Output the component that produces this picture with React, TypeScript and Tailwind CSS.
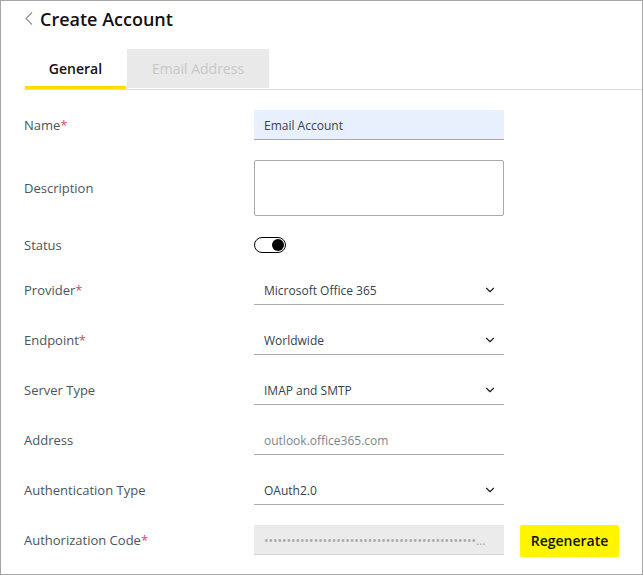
import { ChevronDown } from "lucide-react";

const labelClass = "w-[230px] shrink-0 pt-[2px] text-[13px] text-[#4a5560]";

const Label = ({ text, required }: { text: string; required?: boolean }) => (
  <div className={labelClass}>
    {text}
    {required && <span className="text-[#d9486a]">*</span>}
  </div>
);

const SelectRow = ({ label, value, required }: { label: string; value: string; required?: boolean }) => (
  <div className="flex items-center">
    <Label text={label} required={required} />
    <div className="flex h-[30px] w-[250px] items-center justify-between border-b border-[#aaaaaa] pl-[10px] pr-[7px] pt-[2px] text-[12px] text-[#36424e]">
      <span>{value}</span>
      <ChevronDown className="mb-[2px] h-[14px] w-[14px] text-[#222222]" strokeWidth={2} />
    </div>
  </div>
);

export default function App() {
  return (
    <div className="h-[575px] w-[643px] overflow-hidden border border-[#a6a6a6] bg-white font-['Open_Sans',sans-serif]">
      <div className="flex h-[48px] items-start pl-[24px] pt-[6px]">
        <svg className="mt-[5px] shrink-0" width="8" height="13" viewBox="0 0 8 13" fill="none">
          <path d="M7 0.5L1 6.5L7 12.5" stroke="#8f8f8f" strokeWidth="1.1" />
        </svg>
        <h1 className="ml-[7px] text-[18px] leading-[24px] font-semibold text-[#111111]">Create Account</h1>
      </div>
      <div className="ml-[23px] flex h-[41px] items-start border-b border-[#dddddd]">
        <div className="ml-[1px] flex h-[40px] w-[101px] items-center justify-center border-b-[3px] border-[#ffdd00] pt-[1px] text-[14px] font-semibold text-[#111111]">
          General
        </div>
        <div className="ml-[1px] flex h-[39px] w-[142px] items-center justify-center bg-[#e9e9e9] text-[14px] font-medium text-[#c8c8c8]">
          Email Address
        </div>
      </div>
      <div className="ml-[23px] flex flex-col pt-[20px]">
        <div className="flex items-center">
          <Label text="Name" required />
          <div className="flex h-[30px] w-[250px] items-center border-b border-[#aaaaaa] bg-[#e8f0fe] pl-[10px] pt-[2px] text-[12px] text-[#36424e]">
            Email Account
          </div>
        </div>
        <div className="mt-[20px] flex items-center">
          <Label text="Description" />
          <div className="h-[56px] w-[250px] rounded-[2px] border border-[#aaaaaa]" />
        </div>
        <div className="mt-[19px] flex h-[20px] items-center">
          <Label text="Status" />
          <div className="flex h-[16px] w-[32px] items-center justify-end rounded-full border border-black pr-[1px]">
            <div className="h-[12px] w-[12px] rounded-full bg-black" />
          </div>
        </div>
        <div className="mt-[20px] flex flex-col gap-[20px]">
          <SelectRow label="Provider" value="Microsoft Office 365" required />
          <SelectRow label="Endpoint" value="Worldwide" required />
          <SelectRow label="Server Type" value="IMAP and SMTP" />
          <div className="flex items-center">
            <Label text="Address" />
            <div className="flex h-[30px] w-[250px] items-center border-b border-[#aaaaaa] pl-[10px] pt-[2px] text-[12px] text-[#7d858c]">
              outlook.office365.com
            </div>
          </div>
          <SelectRow label="Authentication Type" value="OAuth2.0" />
          <div className="flex h-[30px] items-center">
            <Label text="Authorization Code" required />
            <div className="flex h-[30px] w-[250px] items-center border-b border-[#d4d4d4] bg-[#ebebeb] pl-[10px] pr-[18px] pt-[2px] text-[12px] text-[#a8a8a8]">
              <span className="block w-full overflow-hidden text-ellipsis whitespace-nowrap">
                ••••••••••••••••••••••••••••••••••••••••••••••••••••••••••••••••••••••••••••••••••••••••
              </span>
            </div>
            <button className="ml-[16px] h-[32px] w-[99px] self-start rounded-[2px] bg-[#fff500] pb-[2px] text-[14px] font-semibold text-[#111111]">
              Regenerate
            </button>
          </div>
        </div>
      </div>
    </div>
  );
}
